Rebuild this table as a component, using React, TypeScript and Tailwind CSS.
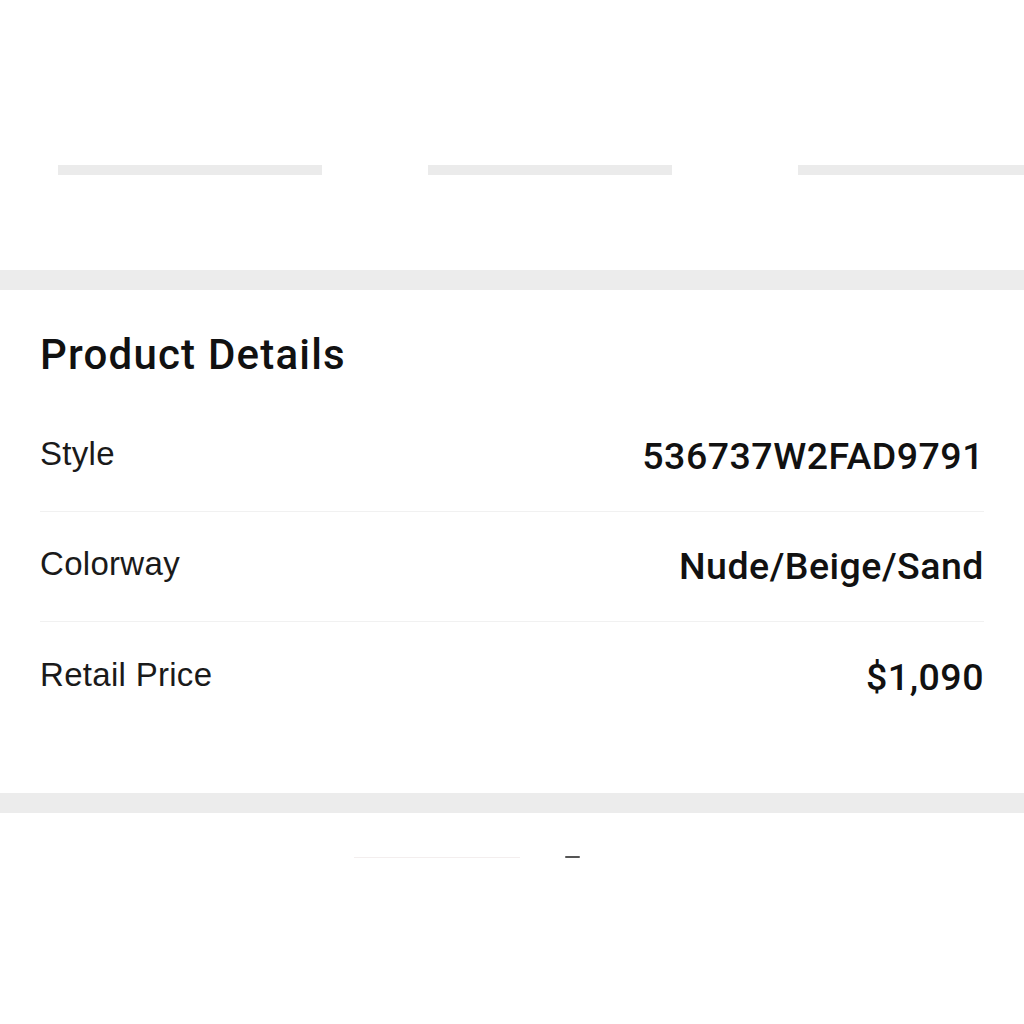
const rows = [
  { label: "Style", value: "536737W2FAD9791" },
  { label: "Colorway", value: "Nude/Beige/Sand" },
  { label: "Retail Price", value: "$1,090" },
];

const medium = { fontFamily: 'Roboto, "Liberation Sans", sans-serif' };

function App() {
  return (
    <div
      className="w-[1024px] h-[1024px] bg-white overflow-hidden text-[#111]"
      style={{ fontFamily: '"Liberation Sans", Arial, sans-serif' }}
    >
      {/* carousel placeholders */}
      <div className="h-[270px] pt-[165px] pl-[58px] flex items-start">
        <div className="h-[10px] w-[264px] bg-[#ebebeb]" />
        <div className="h-[10px] w-[244px] ml-[106px] bg-[#ebebeb]" />
        <div className="h-[10px] flex-1 ml-[126px] bg-[#ebebeb]" />
      </div>

      <div className="h-5 bg-[#ececec]" />

      {/* details */}
      <div className="px-10 pt-10 pb-[61px]">
        <h2 className="text-[42px] leading-[50px] font-medium tracking-[1.2px]" style={medium}>
          Product Details
        </h2>
        <div className="mt-[22px]">
          {rows.map((row, i) => (
            <div
              key={row.label}
              className={
                "h-[110px] flex items-center justify-between " +
                (i < rows.length - 1 ? "border-b border-[#f1f1f1]" : "")
              }
            >
              <span className="text-[33px] tracking-[0.3px] text-[#1a1a1a] -mt-[5px]">
                {row.label}
              </span>
              <span className="text-[37.5px] font-medium tracking-[0.5px]" style={medium}>
                {row.value}
              </span>
            </div>
          ))}
        </div>
      </div>

      <div className="h-5 bg-[#ececec]" />

      {/* next section, barely visible */}
      <div className="pt-[43px] flex items-center">
        <div className="ml-[354px] h-px w-[166px] bg-[#f3eeee]" />
        <div className="ml-[45px] h-[2px] w-[15px] rounded-full bg-[#555]" />
      </div>
    </div>
  );
}

export default App;
